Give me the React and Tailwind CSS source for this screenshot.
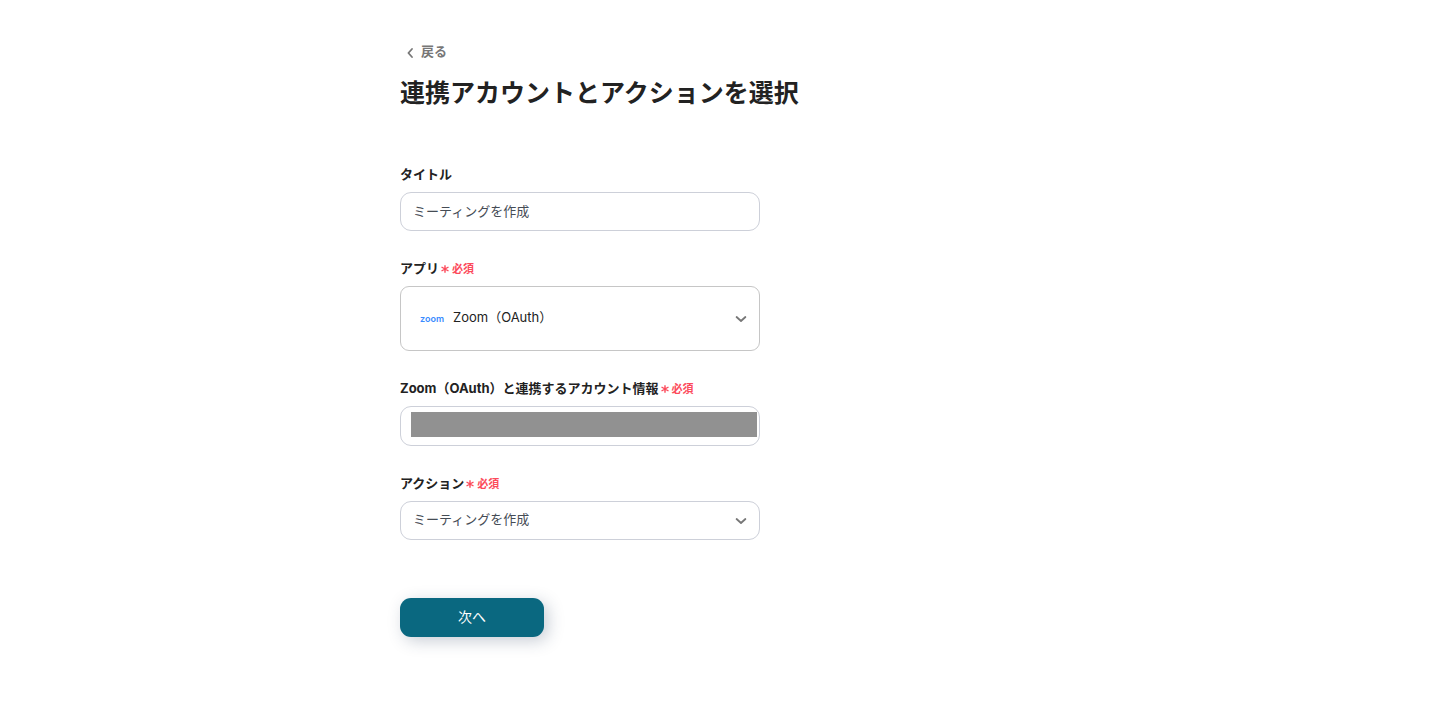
import { useState } from "react";

function Chevron({ className }) {
    return (
        <svg className={className} viewBox="0 0 12 8" fill="none" aria-hidden="true">
            <path
                d="M1.6 2 L6 6 L10.4 2"
                stroke="currentColor"
                strokeWidth="1.8"
                strokeLinecap="round"
                strokeLinejoin="round"
            />
        </svg>
    );
}

function Label({ htmlFor, required, children }) {
    return (
        <label
            htmlFor={htmlFor}
            className="mb-2 flex items-center gap-0.5 text-[13px] leading-5 font-bold text-[#222]"
        >
            <span>{children}</span>
            {required && (
                <span className="flex items-center gap-[3px] pt-0.5 text-[11px] leading-[18px] text-[#fc4a5b]">
                    <svg className="h-2 w-2" viewBox="0 0 8 8" aria-hidden="true">
                        <path
                            d="M4 0.2 V7.8 M0.5 2 L7.5 6 M0.5 6 L7.5 2"
                            stroke="currentColor"
                            strokeWidth="1.4"
                        />
                    </svg>
                    必須
                </span>
            )}
        </label>
    );
}

export default function App() {
    const [title, setTitle] = useState("ミーティングを作成");

    return (
        <main className="min-h-screen bg-white px-4 pt-10 pb-20 font-[Inter,'Noto_Sans_CJK_JP',sans-serif] text-[#222]">
            <div className="mx-auto max-w-[634px]">
                <button
                    type="button"
                    className="flex items-center gap-[7px] pl-1.5 text-[13px] leading-[22px] font-bold text-[#777]"
                >
                    <svg className="mt-1 h-3 w-2" viewBox="0 0 8 12" fill="none" aria-hidden="true">
                        <path
                            d="M6 2 L2.4 6 L6 10"
                            stroke="currentColor"
                            strokeWidth="1.8"
                            strokeLinecap="round"
                            strokeLinejoin="round"
                        />
                    </svg>
                    戻る
                </button>
                <h1 className="mt-[11px] text-[25px] leading-10 font-bold">
                    連携アカウントとアクションを選択
                </h1>

                <form
                    className="mt-[51px] flex max-w-[360px] flex-col gap-[27px]"
                    onSubmit={(e) => e.preventDefault()}
                >
                    <div>
                        <Label htmlFor="title">タイトル</Label>
                        <input
                            id="title"
                            type="text"
                            value={title}
                            onChange={(e) => setTitle(e.target.value)}
                            className="block h-[39px] w-full rounded-[11px] border border-[#cdd0d9] bg-white px-3 pb-0.5 text-[13px] text-[#454c55]"
                        />
                    </div>

                    <div>
                        <Label htmlFor="app" required>
                            アプリ
                        </Label>
                        <div className="relative">
                            <select
                                id="app"
                                className="block h-[65px] w-full appearance-none rounded-[9px] border border-[#c6c6c6] bg-white pr-10 pb-0.5 pl-[52px] text-[13px] text-[#222]"
                            >
                                <option>Zoom（OAuth）</option>
                            </select>
                            <span className="pointer-events-none absolute inset-y-0 left-5 flex items-center font-[Inter,sans-serif] text-[9px] font-semibold text-[#3b8cff]">
                                zoom
                            </span>
                            <span className="pointer-events-none absolute inset-y-0 right-[13px] flex items-center text-[#777]">
                                <Chevron className="h-2 w-3" />
                            </span>
                        </div>
                    </div>

                    <div>
                        <Label htmlFor="account" required>
                            Zoom（OAuth）と連携するアカウント情報
                        </Label>
                        <div className="relative">
                            <select
                                id="account"
                                className="block h-10 w-full appearance-none rounded-[11px] border border-[#cdd0d9] bg-white px-3 text-[13px] text-[#454c55]"
                            >
                                <option></option>
                            </select>
                            <span className="pointer-events-none absolute top-1.5 right-[3px] left-[11px] h-[25px] bg-[#919191]"></span>
                        </div>
                    </div>

                    <div>
                        <Label htmlFor="action" required>
                            アクション
                        </Label>
                        <div className="relative">
                            <select
                                id="action"
                                className="block h-[39px] w-full appearance-none rounded-[11px] border border-[#cdd0d9] bg-white pr-10 pb-0.5 pl-3 text-[13px] text-[#454c55]"
                            >
                                <option>ミーティングを作成</option>
                            </select>
                            <span className="pointer-events-none absolute inset-y-0 right-[13px] flex items-center text-[#777]">
                                <Chevron className="h-2 w-3" />
                            </span>
                        </div>
                    </div>

                    <button
                        type="submit"
                        className="mt-[31px] h-[39px] w-36 rounded-[11px] bg-[#0a6880] pb-0.5 text-sm text-white shadow-[4px_4px_16px_rgba(40,60,90,0.25)]"
                    >
                        次へ
                    </button>
                </form>
            </div>
        </main>
    );
}
